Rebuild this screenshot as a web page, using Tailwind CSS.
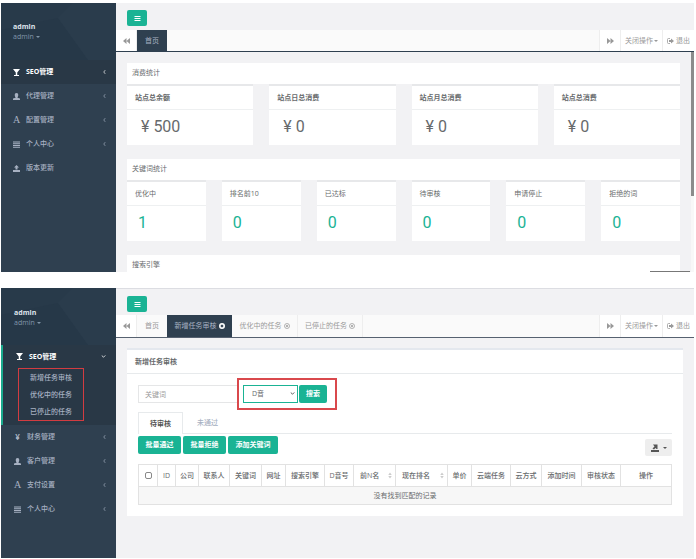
<!DOCTYPE html>
<html lang="zh-CN">
  <head>
    <meta charset="UTF-8" />
    <meta name="viewport" content="width=device-width, initial-scale=1.0" />
    <title>SEO管理后台</title>
    <script src="https://cdn.jsdelivr.net/npm/@tailwindcss/browser@4"></script>
    <style>
      body {
        font-family: "Open Sans", "Noto Sans CJK SC", sans-serif;
      }
    </style>
  </head>
  <body class="bg-white text-[7px] leading-[10px] text-[#676a6c]">
    <!-- shared icons -->
    <svg class="hidden">
      <symbol id="bars" viewBox="0 0 14 14"><path d="M1 2h12v2H1zM1 6h12v2H1zM1 10h12v2H1z" fill="currentColor" /></symbol>
      <symbol id="glass" viewBox="0 0 14 14"><path d="M0 0h14L8.500 7v5H12v2H2v-2h3.500V7z" fill="currentColor" /></symbol>
      <symbol id="user" viewBox="0 0 14 14"><path d="M7 0c2.500 0 3.500 1.500 3.500 4S9.500 8 9 8.500v1L14 11v3H0v-3l5-1.500v-1C4.500 8 3.500 6.500 3.500 4S4.500 0 7 0z" fill="currentColor" /></symbol>
      <symbol id="list" viewBox="0 0 14 14"><path d="M0 1h14v2H0zM0 4.500h14v2H0zM0 8h14v2H0zM0 11.500h14v2H0z" fill="currentColor" /></symbol>
      <symbol id="upload" viewBox="0 0 14 14"><path d="M7 0l5 5H9v4H5V5H2zM0 10h14v4H0z" fill="currentColor" /></symbol>
      <symbol id="left" viewBox="0 0 8 14"><path d="M6 2L2 7l4 5" fill="none" stroke="currentColor" stroke-width="1.800" /></symbol>
      <symbol id="down" viewBox="0 0 14 8"><path d="M2 1l5 5 5-5" fill="none" stroke="currentColor" stroke-width="2.200" /></symbol>
      <symbol id="caret" viewBox="0 0 8 4"><path d="M0 0h8L4 4z" fill="currentColor" /></symbol>
      <symbol id="backward" viewBox="0 0 14 12"><path d="M7 0v12L0 6zM14 0v12L7 6z" fill="currentColor" /></symbol>
      <symbol id="forward" viewBox="0 0 14 12"><path d="M0 0v12l7-6zM7 0v12l7-6z" fill="currentColor" /></symbol>
      <symbol id="signout" viewBox="0 0 14 12"><path d="M6 1H3Q1 1 1 3v6q0 2 2 2h3" fill="none" stroke="currentColor" stroke-width="1.600" /><path d="M4 4h4V1l6 5-6 5V8H4z" fill="currentColor" /></symbol>
      <symbol id="close" viewBox="0 0 12 12"><path fill-rule="evenodd" d="M6 0a6 6 0 100 12A6 6 0 006 0zM3 4.500L4.500 3 6 4.500 7.500 3 9 4.500 7.500 6 9 7.500 7.500 9 6 7.500 4.500 9 3 7.500 4.500 6z" fill="currentColor" /></symbol>
      <symbol id="closeline" viewBox="0 0 12 12"><circle cx="6" cy="6" r="5" fill="none" stroke="currentColor" stroke-width="1.500" /><path d="M4 4l4 4M8 4L4 8" stroke="currentColor" stroke-width="1.500" /></symbol>
      <symbol id="export" viewBox="0 0 16 16"><path d="M0 12h16v4H0zM4 1h9v9h-2L9 8l-3 3-3-2 4-4z" fill="currentColor" /></symbol>
      <symbol id="sort" viewBox="0 0 6 12"><path d="M0 5l3-4 3 4zM0 7h6l-3 4z" fill="currentColor" /></symbol>
      <symbol id="navbg" viewBox="0 0 115 57"><path d="M0 0h115v57H0z" fill="#283a4a" /><path d="M0 27l57-12L87 57H0z" fill="#263848" /><path d="M57 15L72 0h43v57H87z" fill="#2a3c4c" /></symbol>
    </svg>

    <main class="flex flex-col gap-4 pl-px pr-0.5 pt-[3px]">
      <!-- dashboard -->
      <section class="flex">
        <aside class="w-[115px] shrink-0 bg-[#2f4050] text-[#a7b1c2]">
          <div class="relative h-[57px] pl-3 pt-[19px]">
            <svg class="absolute inset-0 h-full w-full" preserveAspectRatio="none"><use href="#navbg" /></svg>
            <div class="relative font-bold text-[#dfe4ed]">admin</div>
            <a href="#" class="relative flex items-center gap-0.5 text-[#8095a8]">admin<svg class="h-0.5 w-1"><use href="#caret" /></svg></a>
          </div>
          <nav>
            <a href="#" class="flex h-6 items-center gap-1.5 bg-[#293846] pl-3 pr-2.5 font-bold text-white"><svg class="h-[7px] w-[7px]"><use href="#glass" /></svg>SEO管理<svg class="ml-auto h-[6px] w-[3px]"><use href="#left" /></svg></a>
            <a href="#" class="flex h-6 items-center gap-1.5 pl-3 pr-2.5 font-medium"><svg class="h-[7px] w-[7px]"><use href="#user" /></svg>代理管理<svg class="ml-auto h-[6px] w-[3px]"><use href="#left" /></svg></a>
            <a href="#" class="flex h-6 items-center gap-1.5 pl-3 pr-2.5 font-medium"><span class="w-[7px] font-['Liberation_Serif'] text-[10px]">A</span>配置管理<svg class="ml-auto h-[6px] w-[3px]"><use href="#left" /></svg></a>
            <a href="#" class="flex h-6 items-center gap-1.5 pl-3 pr-2.5 font-medium"><svg class="h-[7px] w-[7px]"><use href="#list" /></svg>个人中心<svg class="ml-auto h-[6px] w-[3px]"><use href="#left" /></svg></a>
            <a href="#" class="flex h-6 items-center gap-1.5 pl-3 pr-2.5 font-medium"><svg class="h-[7px] w-[7px]"><use href="#upload" /></svg>版本更新</a>
          </nav>
        </aside>

        <div class="flex min-w-0 flex-1 flex-col bg-[#f2f2f4]">
          <div class="h-[27px] pl-[11px] pt-[7px]">
            <button aria-label="菜单" class="flex h-4 w-5 items-center justify-center rounded-xs bg-[#1ab394] text-white"><svg class="h-[7px] w-[7px]"><use href="#bars" /></svg></button>
          </div>
          <div class="flex h-[22px] border-b border-[#2f4050] bg-[#fafafa] text-[#999]">
            <button aria-label="左移" class="flex w-[21px] items-center justify-center border-r border-[#eee] bg-white"><svg class="h-[6px] w-[7px]"><use href="#backward" /></svg></button>
            <a href="#" class="flex w-[30px] items-center justify-center bg-[#2f4050] text-[#a7b1c2]">首页</a>
            <button aria-label="右移" class="ml-auto flex w-[22px] items-center justify-center border-x border-[#eee] bg-white"><svg class="h-[6px] w-[7px]"><use href="#forward" /></svg></button>
            <button class="flex w-[42px] items-center justify-center gap-px border-r border-[#eee] bg-white">关闭操作<svg class="h-0.5 w-1"><use href="#caret" /></svg></button>
            <a href="#" class="flex w-[31px] items-center justify-center gap-0.5 bg-white"><svg class="h-[6px] w-[7px]"><use href="#signout" /></svg>退出</a>
          </div>

          <div class="flex flex-1">
            <div class="flex flex-1 flex-col pl-[11px] pr-[11px] pt-[11px]">
              <h2 class="h-[21px] bg-white pl-[5px] pt-[5px]">消费统计</h2>
              <div class="grid grid-cols-4 gap-4">
                <div class="border-t-2 border-[#e7e8ea] bg-white">
                  <h3 class="flex h-6 items-center border-b border-[#eef0f1] pl-2 font-semibold">站点总余额</h3>
                  <p class="h-[35px] pl-3.5 pt-[7px] font-[Roboto] text-[16px] leading-5">¥ 500</p>
                </div>
                <div class="border-t-2 border-[#e7e8ea] bg-white">
                  <h3 class="flex h-6 items-center border-b border-[#eef0f1] pl-2 font-semibold">站点日总消费</h3>
                  <p class="h-[35px] pl-3.5 pt-[7px] font-[Roboto] text-[16px] leading-5">¥ 0</p>
                </div>
                <div class="border-t-2 border-[#e7e8ea] bg-white">
                  <h3 class="flex h-6 items-center border-b border-[#eef0f1] pl-2 font-semibold">站点月总消费</h3>
                  <p class="h-[35px] pl-3.5 pt-[7px] font-[Roboto] text-[16px] leading-5">¥ 0</p>
                </div>
                <div class="border-t-2 border-[#e7e8ea] bg-white">
                  <h3 class="flex h-6 items-center border-b border-[#eef0f1] pl-2 font-semibold">站点总消费</h3>
                  <p class="h-[35px] pl-3.5 pt-[7px] font-[Roboto] text-[16px] leading-5">¥ 0</p>
                </div>
              </div>

              <h2 class="mt-3.5 h-[21px] bg-white pl-[5px] pt-[5px]">关键词统计</h2>
              <div class="grid grid-cols-6 gap-4">
                <div class="border-t-2 border-[#e7e8ea] bg-white">
                  <h3 class="flex h-6 items-center border-b border-[#eef0f1] pl-2">优化中</h3>
                  <p class="h-[35px] pl-[11px] pt-[7px] font-[Roboto] text-[16px] leading-5 text-[#1ab394]">1</p>
                </div>
                <div class="border-t-2 border-[#e7e8ea] bg-white">
                  <h3 class="flex h-6 items-center border-b border-[#eef0f1] pl-2">排名前10</h3>
                  <p class="h-[35px] pl-[11px] pt-[7px] font-[Roboto] text-[16px] leading-5 text-[#1ab394]">0</p>
                </div>
                <div class="border-t-2 border-[#e7e8ea] bg-white">
                  <h3 class="flex h-6 items-center border-b border-[#eef0f1] pl-2">已达标</h3>
                  <p class="h-[35px] pl-[11px] pt-[7px] font-[Roboto] text-[16px] leading-5 text-[#1ab394]">0</p>
                </div>
                <div class="border-t-2 border-[#e7e8ea] bg-white">
                  <h3 class="flex h-6 items-center border-b border-[#eef0f1] pl-2">待审核</h3>
                  <p class="h-[35px] pl-[11px] pt-[7px] font-[Roboto] text-[16px] leading-5 text-[#1ab394]">0</p>
                </div>
                <div class="border-t-2 border-[#e7e8ea] bg-white">
                  <h3 class="flex h-6 items-center border-b border-[#eef0f1] pl-2">申请停止</h3>
                  <p class="h-[35px] pl-[11px] pt-[7px] font-[Roboto] text-[16px] leading-5 text-[#1ab394]">0</p>
                </div>
                <div class="border-t-2 border-[#e7e8ea] bg-white">
                  <h3 class="flex h-6 items-center border-b border-[#eef0f1] pl-2">拒绝的词</h3>
                  <p class="h-[35px] pl-[11px] pt-[7px] font-[Roboto] text-[16px] leading-5 text-[#1ab394]">0</p>
                </div>
              </div>

              <div class="relative mt-3.5 h-[17px] bg-white pl-[5px] pt-[5px]">
                <h2>搜索引擎</h2>
                <div class="absolute -right-2.5 bottom-0 h-px w-10 bg-[#777]"></div>
              </div>
            </div>
            <!-- scrollbar -->
            <div class="w-[3px] bg-[#f8f8f8]"><div class="h-36 bg-[#8c8c8c]"></div></div>
          </div>
        </div>
      </section>

      <!-- task review -->
      <section class="flex">
        <aside class="w-[115px] shrink-0 bg-[#2f4050] text-[#a7b1c2]">
          <div class="relative h-[57px] pl-[13px] pt-5">
            <svg class="absolute inset-0 h-full w-full" preserveAspectRatio="none"><use href="#navbg" /></svg>
            <div class="relative font-bold text-[#dfe4ed]">admin</div>
            <a href="#" class="relative flex items-center gap-0.5 text-[#8095a8]">admin<svg class="h-0.5 w-1"><use href="#caret" /></svg></a>
          </div>
          <nav>
            <div class="border-l-2 border-[#19aa8d] bg-[#293846] pb-1">
              <a href="#" class="flex h-[23px] items-center gap-1.5 pl-[13px] pr-2.5 font-bold text-white"><svg class="h-[7px] w-[7px]"><use href="#glass" /></svg>SEO管理<svg class="ml-auto h-[3px] w-[5px]"><use href="#down" /></svg></a>
              <div class="ml-[15px] flex w-[66px] flex-col border border-[#d23c41] pl-[11px] font-medium">
                <a href="#" class="flex h-[17px] items-center">新增任务审核</a>
                <a href="#" class="flex h-[17px] items-center">优化中的任务</a>
                <a href="#" class="flex h-[17px] items-center">已停止的任务</a>
              </div>
            </div>
            <a href="#" class="flex h-6 items-center gap-1.5 pl-[13px] pr-2.5 font-medium"><span class="w-[7px] text-center text-[8px] font-bold">¥</span>财务管理<svg class="ml-auto h-[6px] w-[3px]"><use href="#left" /></svg></a>
            <a href="#" class="flex h-6 items-center gap-1.5 pl-[13px] pr-2.5 font-medium"><svg class="h-[7px] w-[7px]"><use href="#user" /></svg>客户管理<svg class="ml-auto h-[6px] w-[3px]"><use href="#left" /></svg></a>
            <a href="#" class="flex h-6 items-center gap-1.5 pl-[13px] pr-2.5 font-medium"><span class="w-[7px] font-['Liberation_Serif'] text-[10px]">A</span>支付设置<svg class="ml-auto h-[6px] w-[3px]"><use href="#left" /></svg></a>
            <a href="#" class="flex h-6 items-center gap-1.5 pl-[13px] pr-2.5 font-medium"><svg class="h-[7px] w-[7px]"><use href="#list" /></svg>个人中心<svg class="ml-auto h-[6px] w-[3px]"><use href="#left" /></svg></a>
          </nav>
        </aside>

        <div class="min-w-0 flex-1 border-t border-[#dcdde2] bg-[#f2f2f4] pb-[42px]">
          <div class="h-[26px] pl-[11px] pt-[7px]">
            <button aria-label="菜单" class="flex h-4 w-5 items-center justify-center rounded-xs bg-[#1ab394] text-white"><svg class="h-[7px] w-[7px]"><use href="#bars" /></svg></button>
          </div>
          <div class="flex h-[23px] border-b border-[#566170] bg-[#fafafa] text-[#999]">
            <button aria-label="左移" class="flex w-[21px] items-center justify-center border-r border-[#eee] bg-white"><svg class="h-[6px] w-[7px]"><use href="#backward" /></svg></button>
            <a href="#" class="flex w-[30px] items-center justify-center">首页</a>
            <a href="#" class="flex w-[65px] items-center justify-center gap-0.5 bg-[#2f4050] text-[#a7b1c2]">新增任务审核<svg class="h-[6px] w-[6px] text-white"><use href="#close" /></svg></a>
            <a href="#" class="flex w-[66px] items-center justify-center gap-0.5 border-r border-[#eee]">优化中的任务<svg class="h-[6px] w-[6px]"><use href="#closeline" /></svg></a>
            <a href="#" class="flex w-[65px] items-center justify-center gap-0.5 border-r border-[#eee]">已停止的任务<svg class="h-[6px] w-[6px]"><use href="#closeline" /></svg></a>
            <button aria-label="右移" class="ml-auto flex w-[22px] items-center justify-center border-x border-[#eee] bg-white"><svg class="h-[6px] w-[7px]"><use href="#forward" /></svg></button>
            <button class="flex w-[42px] items-center justify-center gap-px border-r border-[#eee] bg-white">关闭操作<svg class="h-0.5 w-1"><use href="#caret" /></svg></button>
            <a href="#" class="flex w-[31px] items-center justify-center gap-0.5 bg-white"><svg class="h-[6px] w-[7px]"><use href="#signout" /></svg>退出</a>
          </div>

          <div class="ml-[11px] mr-[11px] mt-2.5 border-t-2 border-[#e4e8ee] bg-white">
            <h2 class="flex h-6 items-center border-b border-[#e7eaec] pl-2 font-semibold">新增任务审核</h2>
            <div class="px-[11px] pb-[11px] pt-1">
              <!-- search form -->
              <form class="flex items-center">
                <input type="text" aria-label="关键词" placeholder="关键词" class="h-[18px] w-[99px] border border-r-0 border-[#e5e6e7] px-1.5 placeholder:text-[#999]" />
                <div class="flex h-8 w-[100px] items-center gap-px border-2 border-[#d9484c] pl-1">
                  <div class="relative">
                    <select aria-label="搜索引擎" class="h-[18px] w-[55px] appearance-none border border-[#1ab394] bg-white pl-2">
                      <option>D音</option>
                    </select>
                    <svg class="pointer-events-none absolute right-[3px] top-[7px] h-[3px] w-[5px] text-[#333]"><use href="#down" /></svg>
                  </div>
                  <button type="button" class="h-[18px] w-[28px] rounded-xs bg-[#1ab394] font-bold text-white">搜索</button>
                </div>
              </form>

              <div class="mt-0.5 flex h-[22px] border-b border-[#e7eaec]">
                <a href="#" class="-mb-px flex w-[45px] items-center justify-center border border-b-0 border-[#e7eaec] bg-white font-semibold text-[#555]">待审核</a>
                <a href="#" class="flex w-[49px] items-center justify-center font-medium text-[#a7b1c2]">未通过</a>
              </div>

              <div class="mt-0.5 flex gap-0.5">
                <button class="h-[18px] w-[43px] rounded-xs bg-[#1ab394] font-bold text-white">批量通过</button>
                <button class="h-[18px] w-[43px] rounded-xs bg-[#1ab394] font-bold text-white">批量拒绝</button>
                <button class="h-[18px] w-[50px] rounded-xs bg-[#1ab394] font-semibold text-white">添加关键词</button>
                <button aria-label="导出" class="ml-auto mt-[3px] flex h-[17px] w-[27px] items-center justify-center gap-1 rounded-xs bg-[#eee] text-[#555]"><svg class="h-2 w-2"><use href="#export" /></svg><svg class="h-0.5 w-1"><use href="#caret" /></svg></button>
              </div>

              <table class="mt-2 w-full table-fixed border-collapse border border-[#e2e2e2] text-center">
                <thead>
                  <tr class="h-[22px] [&>th]:whitespace-nowrap [&>th]:border-r [&>th]:border-[#e2e2e2] [&>th]:p-0 [&>th]:font-medium">
                    <th class="w-[19px]"><input type="checkbox" aria-label="全选" class="block mx-auto h-[7px] w-[7px] appearance-none rounded-[2px] border border-[#888]" /></th>
                    <th class="w-[18px]">ID</th>
                    <th class="w-[23px]">公司</th>
                    <th class="w-[31px]">联系人</th>
                    <th class="w-8">关键词</th>
                    <th class="w-6">网址</th>
                    <th class="w-[39px]">搜索引擎</th>
                    <th class="w-[29px]">D音号</th>
                    <th class="w-[42px]"><div class="flex items-center justify-between pl-1.5 pr-[3px]">前N名<svg class="h-[7px] w-[4px] text-[#ccc]"><use href="#sort" /></svg></div></th>
                    <th class="w-[52px]"><div class="flex items-center justify-between pl-1.5 pr-[3px]">现在排名<svg class="h-[7px] w-[4px] text-[#ccc]"><use href="#sort" /></svg></div></th>
                    <th class="w-6">单价</th>
                    <th class="w-[39px]">云端任务</th>
                    <th class="w-[31px]">云方式</th>
                    <th class="w-10">添加时间</th>
                    <th class="w-[39px]">审核状态</th>
                    <th>操作</th>
                  </tr>
                </thead>
                <tbody>
                  <tr class="h-[18px] border-t border-[#e2e2e2] bg-[#f7f7f7]">
                    <td colspan="16" class="p-0">没有找到匹配的记录</td>
                  </tr>
                </tbody>
              </table>
            </div>
          </div>
        </div>
      </section>
    </main>
  </body>
</html>
